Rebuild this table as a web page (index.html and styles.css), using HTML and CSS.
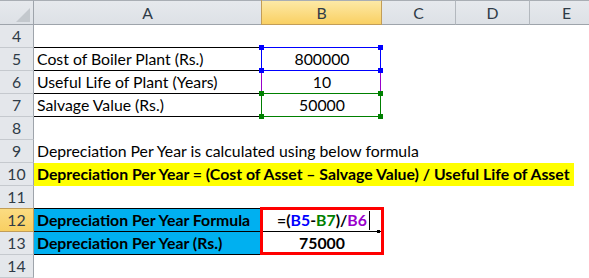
FILE: index.html
```html
<!DOCTYPE html>
<html>
<head>
<meta charset="utf-8">
<link rel="stylesheet" href="styles.css">
</head>
<body>
<div class="sheet">
  <div class="corner"></div>
  <div class="ch">A</div>
  <div class="ch sel">B</div>
  <div class="ch">C</div>
  <div class="ch">D</div>
  <div class="ch">E</div>

  <div class="rh">4</div>
  <div class="c bb"></div><div class="c"></div><div class="c"></div><div class="c"></div><div class="c"></div>

  <div class="rh">5</div>
  <div class="c bb">Cost of Boiler Plant (Rs.)</div>
  <div class="c ctr">800000<div class="ref ref-blue"><i class="h tl"></i><i class="h tr"></i><i class="h bl"></i><i class="h br"></i></div></div>
  <div class="c"></div><div class="c"></div><div class="c"></div>

  <div class="rh">6</div>
  <div class="c bb">Useful Life of Plant (Years)</div>
  <div class="c ctr">10<div class="ref ref-purple"><i class="h tl"></i><i class="h tr"></i><i class="h bl"></i><i class="h br"></i></div></div>
  <div class="c"></div><div class="c"></div><div class="c"></div>

  <div class="rh">7</div>
  <div class="c bb">Salvage Value (Rs.)</div>
  <div class="c ctr">50000<div class="ref ref-green"><i class="h tl"></i><i class="h tr"></i><i class="h bl"></i><i class="h br"></i></div></div>
  <div class="c"></div><div class="c"></div><div class="c"></div>

  <div class="rh">8</div>
  <div class="c"></div><div class="c"></div><div class="c"></div><div class="c"></div><div class="c"></div>

  <div class="rh">9</div>
  <div class="c">Depreciation Per Year is calculated using below formula</div>
  <div class="c"></div><div class="c"></div><div class="c"></div><div class="c"></div>

  <div class="rh">10</div>
  <div class="c flush"><span class="hl">Depreciation Per Year = (Cost of Asset – Salvage Value) / Useful Life of Asset</span></div>
  <div class="c"></div><div class="c"></div><div class="c"></div><div class="c"></div>

  <div class="rh">11</div>
  <div class="c bb"></div><div class="c"></div><div class="c"></div><div class="c"></div><div class="c"></div>

  <div class="rh sel">12</div>
  <div class="c bb b fill">Depreciation Per Year Formula</div>
  <div class="c bb b ctr">=(<span class="k-blue">B5</span>-<span class="k-green">B7</span>)/<span class="k-purple">B6</span><i class="cursor"></i><div class="redbox"></div><i class="fh"></i></div>
  <div class="c"></div><div class="c"></div><div class="c"></div>

  <div class="rh">13</div>
  <div class="c bb b fill">Depreciation Per Year (Rs.)</div>
  <div class="c b ctr">75000</div>
  <div class="c"></div><div class="c"></div><div class="c"></div>

  <div class="rh">14</div>
  <div class="c"></div><div class="c"></div><div class="c"></div><div class="c"></div><div class="c"></div>
</div>
</body>
</html>
```
FILE: styles.css
```css
html, body {
  margin: 0;
  padding: 0;
  background: #fff;
  overflow: hidden;
}

.sheet {
  display: grid;
  grid-template-columns: 34px 228px 120px 74px 74px 74px;
  grid-template-rows: 25px repeat(11, 23px);
  font-family: Lato, "Liberation Sans", sans-serif;
  font-size: 15.8px;
  color: #000;
}

.sheet > div {
  box-sizing: border-box;
}

/* header row */
.corner {
  position: relative;
  background: linear-gradient(#e6e9ed, #dde1e6);
  border-top: 1px solid #a9aeb4;
  border-right: 1px solid #9ea4ab;
  border-bottom: 1px solid #9ea4ab;
}
.corner::after {
  content: "";
  position: absolute;
  right: 3px;
  bottom: 2px;
  width: 0;
  height: 0;
  border-left: 14px solid transparent;
  border-bottom: 14px solid #c3c8cd;
}

.ch {
  background: linear-gradient(#e6e9ed, #dde1e6);
  border-top: 1px solid #a9aeb4;
  border-right: 1px solid #b3b8be;
  border-bottom: 1px solid #9ea4ab;
  text-align: center;
  line-height: 23px;
  color: #2f3b47;
}
.ch.sel {
  background: linear-gradient(#fde9a6, #f9d063);
  border-right-color: #c29d58;
  border-bottom-color: #c29d58;
  box-shadow: -1px 0 0 #c29d58;
}

/* row headers */
.rh {
  background: #e4e7eb;
  border-right: 1px solid #9ea4ab;
  border-bottom: 1px solid #c5c9ce;
  text-align: center;
  line-height: 22px;
  color: #2f3b47;
}
.rh.sel {
  background: linear-gradient(#fbdc82, #f8cf62);
  border-right-color: #c29d58;
  border-bottom-color: #c29d58;
  box-shadow: 0 -1px 0 #c29d58;
}

/* cells */
.c {
  position: relative;
  padding: 0 3px;
  line-height: 22px;
  white-space: nowrap;
}
.c.flush { padding: 0; }
.bb { border-bottom: 1px solid #000; }
.ctr { text-align: center; }
.b { font-weight: 700; }
.fill { background: #00b0f0; }

.hl {
  display: inline-block;
  height: 23px;
  padding: 0 4px 0 3px;
  background: #ffff00;
  font-weight: 700;
}

/* reference range highlights */
.ref {
  position: absolute;
  left: -1px;
  top: -1px;
  right: 1px;
  bottom: 0;
  border: 1px solid currentColor;
  pointer-events: none;
}
.ref-blue { color: #0000ff; z-index: 3; }
.ref-purple { color: #9900cc; z-index: 1; }
.ref-green { color: #008000; z-index: 2; }

.h {
  position: absolute;
  width: 5px;
  height: 5px;
  background: currentColor;
}
.h.tl { left: -3px; top: -3px; }
.h.tr { right: -3px; top: -3px; }
.h.bl { left: -3px; bottom: -3px; }
.h.br { right: -3px; bottom: -3px; }

.k-blue { color: #0000ff; }
.k-green { color: #008000; }
.k-purple { color: #9900cc; }

.cursor {
  display: inline-block;
  width: 1px;
  height: 19px;
  margin-left: 2px;
  margin-right: -3px;
  vertical-align: -4px;
  background: #000;
}

.redbox {
  position: absolute;
  left: -2px;
  top: -2px;
  width: 124px;
  height: 48px;
  box-sizing: border-box;
  border: 3px solid #ff0000;
  z-index: 4;
}

.fh {
  position: absolute;
  right: 2px;
  bottom: -2px;
  width: 3px;
  height: 3px;
  background: #000;
  z-index: 5;
}
```
